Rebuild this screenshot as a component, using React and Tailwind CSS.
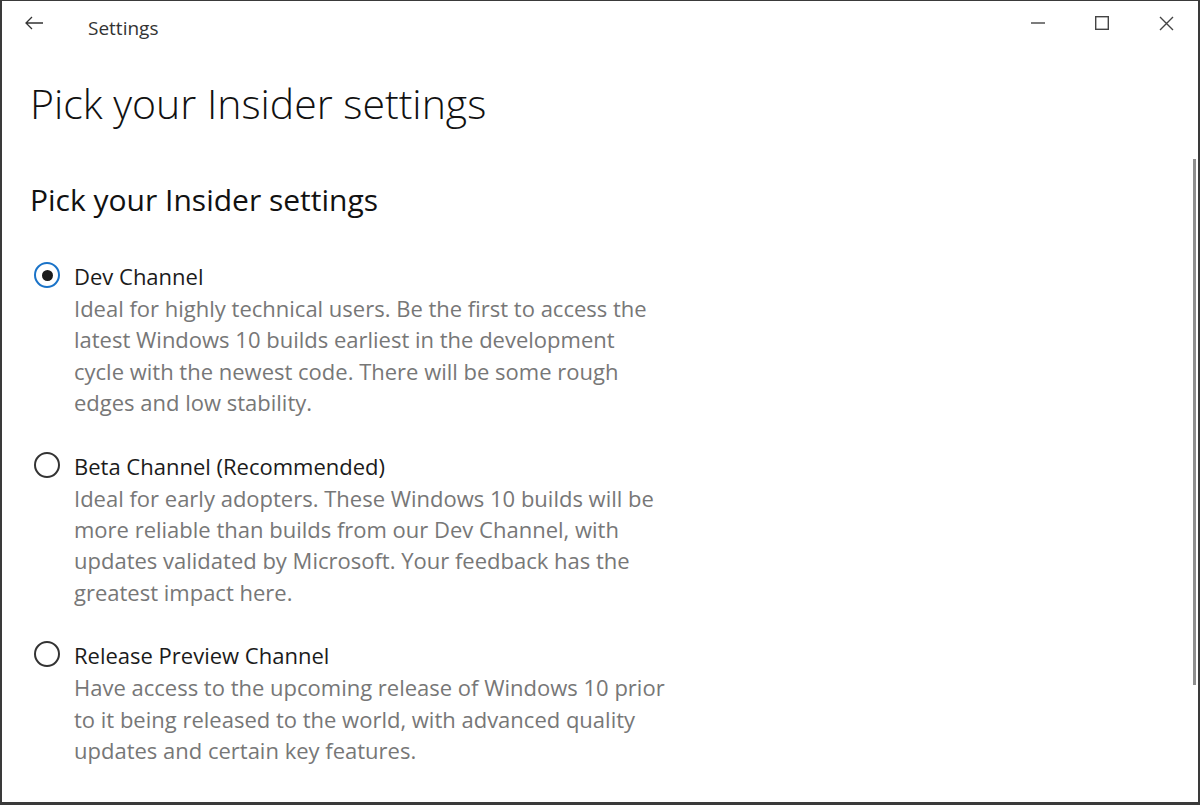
import React, { useState } from 'react';

const channels = [
  {
    id: 'dev',
    name: 'Dev Channel',
    lines: [
      'Ideal for highly technical users. Be the first to access the',
      'latest Windows 10 builds earliest in the development',
      'cycle with the newest code. There will be some rough',
      'edges and low stability.',
    ],
  },
  {
    id: 'beta',
    name: 'Beta Channel (Recommended)',
    lines: [
      'Ideal for early adopters. These Windows 10 builds will be',
      'more reliable than builds from our Dev Channel, with',
      'updates validated by Microsoft. Your feedback has the',
      'greatest impact here.',
    ],
  },
  {
    id: 'release',
    name: 'Release Preview Channel',
    lines: [
      'Have access to the upcoming release of Windows 10 prior',
      'to it being released to the world, with advanced quality',
      'updates and certain key features.',
    ],
  },
];

const Radio = ({ checked }) => (
  <span
    className={`mt-[2px] flex h-[26px] w-[26px] shrink-0 items-center justify-center rounded-full border-[2.5px] ${
      checked ? 'border-[#1a73c8]' : 'border-[#333]'
    }`}
  >
    {checked && <span className="h-[11px] w-[11px] rounded-full bg-[#1b1b1b]" />}
  </span>
);

export default function App() {
  const [selected, setSelected] = useState('dev');

  return (
    <div
      className="flex h-[805px] w-[1200px] flex-col overflow-hidden border-t border-l-2 border-r-2 border-b-[3px] border-[#3a3a3a] bg-white text-[#1b1b1b]"
      style={{ fontFamily: '"Open Sans", "Noto Sans", sans-serif' }}
    >
      {/* title bar */}
      <div className="flex h-[44px] shrink-0 items-center">
        <div className="flex w-[86px] items-center pl-[22px] text-[#333]">
          <svg width="20" height="14" viewBox="0 0 20 14" fill="none" stroke="currentColor" strokeWidth="1.3">
            <path d="M19 7H2M8 1L2 7l6 6" />
          </svg>
        </div>
        <span className="mt-[10px] text-[19px] text-[#333]">Settings</span>
        <div className="ml-auto flex h-full items-center text-[#444]">
          <div className="flex w-[64px] justify-center">
            <svg width="14" height="14" viewBox="0 0 14 14" stroke="currentColor" strokeWidth="1.4">
              <path d="M0 7h14" />
            </svg>
          </div>
          <div className="flex w-[64px] justify-center">
            <svg width="14" height="14" viewBox="0 0 14 14" fill="none" stroke="currentColor" strokeWidth="1.4">
              <rect x="0.7" y="0.7" width="12.6" height="12.6" />
            </svg>
          </div>
          <div className="flex w-[64px] justify-center">
            <svg width="15" height="15" viewBox="0 0 15 15" stroke="currentColor" strokeWidth="1.4">
              <path d="M1 1l13 13M14 1L1 14" />
            </svg>
          </div>
        </div>
      </div>

      {/* content */}
      <div className="relative flex-1">
        <div className="pl-[28px]">
          <h1 className="mt-[30px] text-[41px] font-light leading-[56px] text-[#111]">Pick your Insider settings</h1>
          <h2 className="mt-[49px] text-[30px] leading-[40px] text-[#111]">Pick your Insider settings</h2>

          <div className="mt-[40px] flex flex-col gap-[31px] pl-[4px]">
            {channels.map((c) => (
              <label key={c.id} className="flex cursor-pointer gap-[14px]" onClick={() => setSelected(c.id)}>
                <Radio checked={selected === c.id} />
                <div>
                  <div className="text-[22px] leading-[32px] text-[#1b1b1b]">{c.name}</div>
                  <div className="mt-[1px] text-[22px] leading-[31.4px] text-[#777]">
                    {c.lines.map((l) => (
                      <div key={l}>{l}</div>
                    ))}
                  </div>
                </div>
              </label>
            ))}
          </div>
        </div>

        {/* scrollbar */}
        <div className="absolute right-[2px] top-[114px] h-[526px] w-[3px] bg-[#8f8f8f]" />
      </div>
    </div>
  );
}
